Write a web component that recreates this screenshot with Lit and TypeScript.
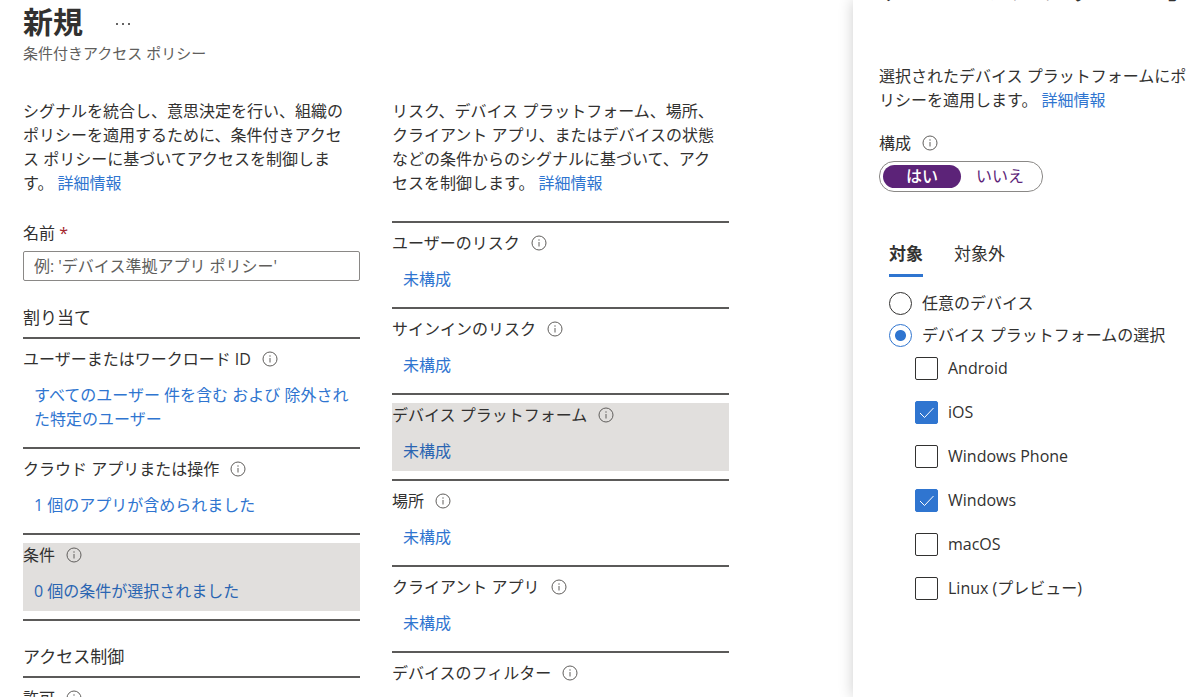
import { LitElement, html, css } from "lit";
import { customElement, property, state } from "lit/decorators.js";

const fontStack = css`"Open Sans", "Noto Sans CJK JP", sans-serif`;

@customElement("info-icon")
class InfoIcon extends LitElement {
  static styles = css`
    :host { display: inline-flex; flex: none; }
    svg { display: block; }
  `;
  render() {
    return html`<svg width="16" height="16" viewBox="0 0 16 16" fill="none" stroke="#605e5c" aria-hidden="true">
      <circle cx="8" cy="8" r="7" />
      <path d="M8 7v4.500" />
      <circle cx="8" cy="5" r="0.7" fill="#605e5c" stroke="none" />
    </svg>`;
  }
}

@customElement("setting-row")
class SettingRow extends LitElement {
  @property() label = "";
  @property() value = "";
  @property({ type: Boolean }) selected = false;

  static styles = css`
    :host { display: block; border-top: 2px solid #5b5a59; padding: 8px 0; }
    .body { padding-bottom: 8px; }
    .selected { background: #e1dfdd; }
    .label { display: flex; align-items: center; gap: 11px; line-height: 24px; }
    .value { display: block; margin: 12px 0 0 11px; line-height: 24px; color: #2f75d0; text-decoration: none; }
    .selected .value { color: #2a65b2; }
  `;
  render() {
    return html`<div class="body ${this.selected ? "selected" : ""}">
      <div class="label"><span>${this.label}</span><info-icon></info-icon></div>
      ${this.value ? html`<a class="value" href="#">${this.value}</a>` : ""}
    </div>`;
  }
}

const conditions = [
  { label: "ユーザーのリスク", value: "未構成" },
  { label: "サインインのリスク", value: "未構成" },
  { label: "デバイス プラットフォーム", value: "未構成", selected: true },
  { label: "場所", value: "未構成" },
  { label: "クライアント アプリ", value: "未構成" },
  { label: "デバイスのフィルター", value: "未構成" },
];

@customElement("app-root")
class AppRoot extends LitElement {
  @state() private enabled = true;
  @state() private platforms = [
    { id: "android", name: "Android", on: false },
    { id: "ios", name: "iOS", on: true },
    { id: "winphone", name: "Windows Phone", on: false },
    { id: "windows", name: "Windows", on: true },
    { id: "macos", name: "macOS", on: false },
    { id: "linux", name: "Linux (プレビュー)", on: false },
  ];

  static styles = css`
    :host {
      display: flex; height: 100vh; overflow: hidden; background: #fff;
      font: 16px/24px ${fontStack}; color: #323130;
    }
    * { box-sizing: border-box; }
    a { color: #2f75d0; text-decoration: none; }
    h1, h2, p { margin: 0; }
    main { flex: 1; min-width: 0; padding: 1px 124px 0 23px; }
    .head { display: flex; align-items: center; gap: 32px; height: 42px; }
    h1 { font-size: 30px; line-height: 42px; font-weight: 700; }
    .more { border: 0; background: none; padding: 0; color: #323130; display: flex; }
    .sub { font-size: 15px; line-height: 20px; color: #605e5c; }
    .columns { display: grid; grid-template-columns: 1fr 1fr; gap: 32px; padding-top: 36px; }
    .intro { padding-right: 8px; }
    .field { display: block; margin-top: 26px; }
    .req { color: #a4262c; }
    .text { display: block; width: 100%; height: 30px; margin-top: 6px; padding: 0 10px;
      border: 1px solid #8a8886; border-radius: 2px; font: inherit; color: inherit; }
    .text::placeholder { color: #605e5c; opacity: 1; }
    h2 { font-size: 17px; line-height: 24px; font-weight: 400; padding-bottom: 7px; }
    .assign { margin-top: 25px; }
    .access { border-top: 2px solid #5b5a59; padding-top: 24px; }
    .conditions { margin-top: 26px; }
    aside { flex: 0 0 347px; padding: 0 8px 0 26px; background: #fff; overflow: hidden;
      box-shadow: 0 0 14px rgba(0, 0, 0, 0.2); }
    .title { font-size: 30px; line-height: 42px; margin: -34px -8px 0 0; padding: 0; font-weight: 700;
      white-space: nowrap; overflow: hidden; }
    .desc { padding-top: 56px; }
    .cfg { display: flex; align-items: center; gap: 11px; margin-top: 19px; }
    .toggle { display: inline-flex; margin-top: 6px; padding: 3px; border: 1px solid #8a8886; border-radius: 15px; }
    .toggle button { border: 0; border-radius: 12px; height: 23px; width: 78px; padding: 0; font: inherit;
      line-height: 23px; background: none; color: #5c2378; }
    .toggle .on { background: #5c2378; color: #fff; font-weight: 500; }
    .tabs { display: flex; gap: 31px; margin: 50px 0 0 10px; }
    .tabs button { border: 0; border-bottom: 3px solid transparent; background: none; padding: 0 0 8px;
      font: inherit; font-size: 17px; line-height: 24px; color: inherit; }
    .tabs .active { font-weight: 700; border-color: #2f75d0; }
    .choice { display: flex; align-items: center; gap: 10px; }
    .radios { margin: 14px 0 0 10px; display: grid; gap: 8px; }
    .checks { margin: 9px 0 0 36px; display: grid; gap: 20px; }
    input[type="radio"], input[type="checkbox"] { appearance: none; flex: none; margin: 0; width: 23px;
      height: 23px; border: 1px solid #323130; background: #fff; }
    input[type="radio"] { border-radius: 50%; }
    input[type="radio"]:checked { border-color: #2f75d0; background: radial-gradient(circle, #2f75d0 5px, #fff 6px); }
    .tick { display: grid; }
    .tick > * { grid-area: 1 / 1; }
    .tick input { border-radius: 2px; }
    .tick input:checked { background: #2f75d0; border-color: #2f75d0; }
    .tick svg { pointer-events: none; }
  `;

  private toggle(id: string) {
    this.platforms = this.platforms.map((p) => (p.id === id ? { ...p, on: !p.on } : p));
  }

  render() {
    return html`
      <main>
        <div class="head">
          <h1>新規</h1>
          <button class="more" aria-label="その他">
            <svg width="16" height="16" viewBox="0 0 16 16" fill="currentColor"><circle cx="2" cy="10" r="1" /><circle cx="8" cy="10" r="1" /><circle cx="14" cy="10" r="1" /></svg>
          </button>
        </div>
        <div class="sub">条件付きアクセス ポリシー</div>
        <div class="columns">
          <section>
            <p class="intro">シグナルを統合し、意思決定を行い、組織のポリシーを適用するために、条件付きアクセス ポリシーに基づいてアクセスを制御します。 <a href="#">詳細情報</a></p>
            <label class="field">名前 <span class="req">*</span>
              <input class="text" type="text" placeholder="例: 'デバイス準拠アプリ ポリシー'" />
            </label>
            <h2 class="assign">割り当て</h2>
            <setting-row label="ユーザーまたはワークロード ID" value="すべてのユーザー 件を含む および 除外された特定のユーザー"></setting-row>
            <setting-row label="クラウド アプリまたは操作" value="1 個のアプリが含められました"></setting-row>
            <setting-row label="条件" value="0 個の条件が選択されました" selected></setting-row>
            <h2 class="access">アクセス制御</h2>
            <setting-row label="許可"></setting-row>
          </section>
          <section>
            <p class="intro">リスク、デバイス プラットフォーム、場所、クライアント アプリ、またはデバイスの状態などの条件からのシグナルに基づいて、アクセスを制御します。 <a href="#">詳細情報</a></p>
            <div class="conditions">
              ${conditions.map((c) => html`<setting-row label=${c.label} value=${c.value} ?selected=${c.selected}></setting-row>`)}
            </div>
          </section>
        </div>
      </main>
      <aside>
        <h2 class="title">デバイス プラットフォーム</h2>
        <p class="desc">選択されたデバイス プラットフォームにポリシーを適用します。 <a href="#">詳細情報</a></p>
        <div class="cfg"><span>構成</span><info-icon></info-icon></div>
        <div class="toggle">
          <button class=${this.enabled ? "on" : ""} @click=${() => (this.enabled = true)}>はい</button>
          <button class=${this.enabled ? "" : "on"} @click=${() => (this.enabled = false)}>いいえ</button>
        </div>
        <div class="tabs" role="tablist">
          <button class="active" role="tab" aria-selected="true">対象</button>
          <button role="tab" aria-selected="false">対象外</button>
        </div>
        <div class="radios">
          <label class="choice"><input type="radio" name="scope" />任意のデバイス</label>
          <label class="choice"><input type="radio" name="scope" checked />デバイス プラットフォームの選択</label>
        </div>
        <div class="checks">
          ${this.platforms.map((p) => html`<label class="choice">
            <span class="tick">
              <input type="checkbox" .checked=${p.on} @change=${() => this.toggle(p.id)} />
              ${p.on ? html`<svg width="23" height="23" viewBox="0 0 23 23" fill="none" stroke="#fff" aria-hidden="true"><path d="M5 12l4.500 4.500L18.500 7" /></svg>` : ""}
            </span>${p.name}</label>`)}
        </div>
      </aside>
    `;
  }
}
